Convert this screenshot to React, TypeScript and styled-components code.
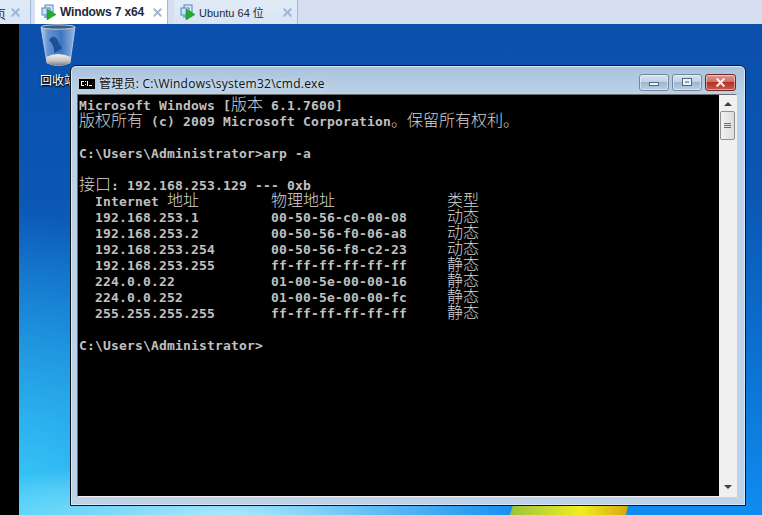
import styled, { createGlobalStyle } from "styled-components";
import { X } from "lucide-react";

const GlobalStyle = createGlobalStyle`
  html, body {
    margin: 0;
    padding: 0;
    width: 762px;
    height: 515px;
    overflow: hidden;
    background: #000;
  }
`;

const Page = styled.div`
  width: 762px;
  height: 515px;
  display: flex;
  flex-direction: column;
  overflow: hidden;
  font-family: "Liberation Sans", "Noto Sans CJK SC", sans-serif;
`;

const TabBar = styled.div`
  height: 24px;
  flex: none;
  display: flex;
  background: #d5dff0;
`;

const Tab = styled.div<{ $width: number; $active?: boolean; $gap?: number }>`
  width: ${(p) => p.$width}px;
  margin-left: ${(p) => p.$gap ?? 0}px;
  display: flex;
  align-items: center;
  box-sizing: border-box;
  padding-left: 6px;
  gap: 3px;
  font-size: 12px;
  color: #1b2a3a;
  background: ${(p) => (p.$active ? "#fff" : "linear-gradient(#e1ebf8, #d9e5f5)")};
  font-weight: ${(p) => (p.$active ? 700 : 400)};
  border-right: 1px solid #a4b8d2;
`;

const TabLabel = styled.span<{ $active?: boolean }>`
  flex: 1;
  white-space: nowrap;
  font-size: ${(p) => (p.$active ? 12 : 11)}px;
  letter-spacing: ${(p) => (p.$active ? "-0.15px" : "0")};
`;

const PartialTab = styled(Tab)`
  padding-left: 0;
  justify-content: flex-end;
  padding-right: 5px;
  position: relative;
`;

const Clipped = styled.span`
  position: absolute;
  left: -6px;
  top: 5px;
`;

const CloseMark = styled(X)`
  flex: none;
  margin-right: 3px;
  color: #9db6d2;
`;

const Body = styled.div`
  flex: 1;
  display: flex;
  min-height: 0;
`;

const BlackStrip = styled.div`
  width: 19px;
  flex: none;
  background: #000;
`;

const Desktop = styled.div`
  flex: 1;
  position: relative;
  overflow: hidden;
  background:
    radial-gradient(ellipse 300px 60px at 210px 495px, rgba(190, 245, 252, 0.95), rgba(120, 225, 250, 0) 100%),
    radial-gradient(ellipse 240px 310px at 0 500px, rgba(62, 208, 248, 0.95), rgba(48, 190, 245, 0) 100%),
    linear-gradient(#0b4fac 0%, #0b57b4 35%, #0c74d4 72%, #108cf0 100%);
`;

const Grass = styled.div`
  position: absolute;
  left: 491px;
  bottom: 0;
  width: 118px;
  height: 10px;
  clip-path: polygon(3px 0, 100% 0, 116px 100%, 0 100%);
  background: linear-gradient(90deg, #9cc33c, #f0ee20 60%, #d8a810);
`;

const DesktopIcon = styled.div`
  position: absolute;
  left: 21px;
  top: 0;
  width: 48px;
  display: flex;
  flex-direction: column;
  align-items: flex-start;
`;

const IconLabel = styled.span`
  margin-top: 6px;
  font-size: 12px;
  line-height: 14px;
  color: #fff;
  white-space: nowrap;
  text-shadow: 0 1px 2px #000, 1px 1px 1px #000;
`;

const Window = styled.div`
  position: absolute;
  left: 51px;
  top: 41px;
  width: 676px;
  height: 441px;
  box-sizing: border-box;
  display: flex;
  flex-direction: column;
  border: 1px solid #10181f;
  border-radius: 6px 6px 0 0;
  background: linear-gradient(#a9c2dc 0, #bcd2e8 30px, #bfd2e9 100%);
  box-shadow: inset 0 0 0 1px #d8e8f6, inset 0 -1px 0 #3cc8e8;
  padding: 0 8px 8px 6px;
`;

const TitleBar = styled.div`
  height: 28px;
  flex: none;
  display: flex;
  align-items: center;
  padding: 6px 0 0 2px;
  box-sizing: border-box;
`;

const TitleText = styled.span`
  margin-left: 4px;
  font-family: "Open Sans", "Noto Sans CJK SC", sans-serif;
  font-size: 12px;
  letter-spacing: 0.25px;
  color: #111;
  text-shadow: 0 0 4px #e4eef8;
`;

const Controls = styled.div`
  margin-left: auto;
  display: flex;
  gap: 3px;
  margin-right: 1px;
  margin-top: -2px;
`;

const ControlButton = styled.div<{ $close?: boolean }>`
  width: ${(p) => (p.$close ? 29 : 28)}px;
  height: 15px;
  border: 1px solid ${(p) => (p.$close ? "#6e2a2a" : "#71869d")};
  border-radius: 3px;
  display: flex;
  align-items: center;
  justify-content: center;
  background: ${(p) =>
    p.$close
      ? "linear-gradient(#dc9a92 0, #cf7068 45%, #b33226 50%, #c85a4a 100%)"
      : "linear-gradient(#d6e3f0 0, #bfd2e6 45%, #9fb6ce 50%, #bcd0e4 100%)"};
  box-shadow: inset 0 0 0 1px rgba(255, 255, 255, 0.45);
`;

const MinGlyph = styled.div`
  width: 8px;
  height: 2px;
  margin-top: 4px;
  background: #eef3f8;
  border: 1px solid #56677b;
`;

const MaxGlyph = styled.div`
  width: 4px;
  height: 2px;
  background: #8ea6bf;
  border: 2px solid #eef3f8;
  outline: 1px solid #56677b;
`;

const ConsoleRow = styled.div`
  flex: 1;
  min-height: 0;
  display: flex;
  border-top: 1px solid #6d6d6d;
  border-left: 1px solid #6d6d6d;
  border-bottom: 1px solid #f0f0f0;
  border-right: 1px solid #f0f0f0;
`;

const Console = styled.pre`
  flex: 1;
  margin: 0;
  padding: 3px 0 0 1px;
  background: #000;
  color: #c0c0c0;
  font-family: "DejaVu Sans Mono", "Liberation Mono", monospace;
  font-size: 13px;
  font-weight: 700;
  line-height: 16px;
  overflow: hidden;
`;

const Line = styled.div`
  height: 16px;
  white-space: pre;
  letter-spacing: 0.17px;
`;

const Han = styled.span`
  font-family: "Noto Sans CJK SC", sans-serif;
  font-weight: 300;
  font-size: 16px;
  letter-spacing: 0;
  line-height: 0;
  color: #d8d8d8;
  opacity: 0.99;
`;

const ScrollBar = styled.div`
  width: 17px;
  flex: none;
  background: #f0f0f0;
  display: flex;
  flex-direction: column;
  align-items: center;
`;

const Arrow = styled.div<{ $down?: boolean }>`
  width: 0;
  height: 0;
  flex: none;
  margin: ${(p) => (p.$down ? "auto 0 7px" : "7px 0 5px")};
  border-left: 4px solid transparent;
  border-right: 4px solid transparent;
  ${(p) => (p.$down ? "border-top: 4px solid #404040;" : "border-bottom: 4px solid #404040;")}
`;

const Thumb = styled.div`
  width: 15px;
  height: 29px;
  flex: none;
  box-sizing: border-box;
  border: 1px solid #8f8f8f;
  border-radius: 2px;
  background: linear-gradient(90deg, #f2f2f2, #dcdcdc);
  display: flex;
  flex-direction: column;
  align-items: center;
  justify-content: center;
  gap: 1px;
`;

const Grip = styled.div`
  width: 7px;
  height: 1px;
  background: #6b6b6b;
`;

const VmIcon = () => (
  <svg width="16" height="16" viewBox="0 0 16 16">
    <rect x="4" y="1" width="8" height="7" fill="#dbe8f6" stroke="#4f87c4" />
    <rect x="1" y="4" width="8" height="7" fill="#cfe0f3" stroke="#4f87c4" />
    <rect x="3" y="10" width="4" height="4" fill="#7fb0e0" />
    <path d="M6 5 L15 10.5 L6 16 Z" fill="#1fae2e" stroke="#12801e" strokeWidth="0.5" />
  </svg>
);

const RecycleBin = () => (
  <svg width="36" height="44" viewBox="0 0 36 44">
    <defs>
      <linearGradient id="bin" x1="0" x2="1" y1="0" y2="0">
        <stop offset="0" stopColor="#b4cfec" />
        <stop offset="0.2" stopColor="#6693cf" />
        <stop offset="0.6" stopColor="#3f76c0" />
        <stop offset="1" stopColor="#94b8e0" />
      </linearGradient>
      <linearGradient id="base" x1="0" x2="0" y1="0" y2="1">
        <stop offset="0" stopColor="#f2f2f2" />
        <stop offset="0.6" stopColor="#c4c4c4" />
        <stop offset="1" stopColor="#7c7c7c" />
      </linearGradient>
    </defs>
    <path d="M1 3 L35 3 L30 39 Q18 44 7 39 Z" fill="url(#bin)" stroke="#c4d8ee" strokeWidth="0.8" />
    <ellipse cx="18" cy="3" rx="17" ry="2.2" fill="#3d5a80" stroke="#c8ccd2" />
    <path d="M9 16 Q13 10 17 15 Q19 20 22 24 Q18 28 14 29 Q15 22 9 16 Z" fill="#1d4f9a" />
    <path d="M6 33 Q18 27 31 33 L30 39 Q18 44 7 39 Z" fill="url(#base)" />
  </svg>
);

const rows = [
  ["192.168.253.1  ", "00-50-56-c0-00-08", "动态"],
  ["192.168.253.2  ", "00-50-56-f0-06-a8", "动态"],
  ["192.168.253.254", "00-50-56-f8-c2-23", "动态"],
  ["192.168.253.255", "ff-ff-ff-ff-ff-ff", "静态"],
  ["224.0.0.22     ", "01-00-5e-00-00-16", "静态"],
  ["224.0.0.252    ", "01-00-5e-00-00-fc", "静态"],
  ["255.255.255.255", "ff-ff-ff-ff-ff-ff", "静态"],
];

function App() {
  return (
    <Page>
      <GlobalStyle />
      <TabBar>
        <PartialTab $width={31}>
          <Clipped>页</Clipped>
          <CloseMark size={13} strokeWidth={3.5} />
        </PartialTab>
        <Tab $width={133} $active $gap={4}>
          <VmIcon />
          <TabLabel $active>Windows 7 x64</TabLabel>
          <CloseMark size={13} strokeWidth={3.5} />
        </Tab>
        <Tab $width={124} $gap={6}>
          <VmIcon />
          <TabLabel>Ubuntu 64 位</TabLabel>
          <CloseMark size={13} strokeWidth={3.5} />
        </Tab>
      </TabBar>
      <Body>
        <BlackStrip />
        <Desktop>
          <Grass />
          <DesktopIcon>
            <RecycleBin />
            <IconLabel>回收站</IconLabel>
          </DesktopIcon>
          <Window>
            <TitleBar>
              <svg width="16" height="12" viewBox="0 0 16 12">
                <rect width="16" height="12" fill="#000" />
                <rect y="0" width="16" height="2" fill="#c9c9c9" />
                <path d="M2 4h3v1H2zM2 8h3v1H2zM2 5h1v3H2zM6 4h1v1H6zM6 7h1v1H6zM8 4h1v5H8zM10 8h3v1h-3z" fill="#fff" />
              </svg>
              <TitleText>管理员: C:\Windows\system32\cmd.exe</TitleText>
              <Controls>
                <ControlButton><MinGlyph /></ControlButton>
                <ControlButton><MaxGlyph /></ControlButton>
                <ControlButton $close>
                  <X size={13} strokeWidth={4} color="#f2f2f2" />
                </ControlButton>
              </Controls>
            </TitleBar>
            <ConsoleRow>
              <Console>
                <Line>Microsoft Windows [<Han>版本</Han> 6.1.7600]</Line>
                <Line><Han>版权所有</Han> (c) 2009 Microsoft Corporation<Han>。保留所有权利。</Han></Line>
                <Line />
                <Line>C:\Users\Administrator&gt;arp -a</Line>
                <Line />
                <Line><Han>接口</Han>: 192.168.253.129 --- 0xb</Line>
                <Line>  Internet <Han>地址</Han>         <Han>物理地址</Han>              <Han>类型</Han></Line>
                {rows.map(([ip, mac, kind]) => (
                  <Line key={ip}>  {ip}       {mac}     <Han>{kind}</Han></Line>
                ))}
                <Line />
                <Line>C:\Users\Administrator&gt;</Line>
              </Console>
              <ScrollBar>
                <Arrow />
                <Thumb><Grip /><Grip /><Grip /></Thumb>
                <Arrow $down />
              </ScrollBar>
            </ConsoleRow>
          </Window>
        </Desktop>
      </Body>
    </Page>
  );
}

export default App;
